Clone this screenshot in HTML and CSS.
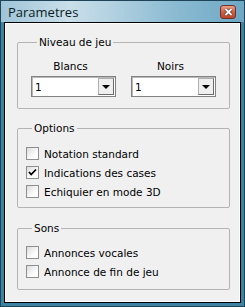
FILE: index.html
```html
<!DOCTYPE html>
<html lang="fr">
<head>
<meta charset="UTF-8" />
<meta name="viewport" content="width=device-width, initial-scale=1" />
<title>Parametres</title>
<link rel="stylesheet" href="styles.css">
</head>
<body>
<div class="window" role="dialog" aria-label="Parametres">
  <div class="titlebar">
    <span class="title">Parametres</span>
    <button class="close-btn" aria-label="Fermer">
      <svg width="9" height="8" viewBox="0 0 9 8"><path d="M1.5 1 L7.5 7 M7.5 1 L1.5 7" stroke="#6a2c20" stroke-width="3.2" fill="none"/><path d="M1.5 1 L7.5 7 M7.5 1 L1.5 7" stroke="#fff" stroke-width="1.8" fill="none"/></svg>
    </button>
  </div>
  <div class="client">
    <fieldset class="group group-level">
      <legend>Niveau de jeu</legend>
      <div class="level-row">
        <div class="level-col">
          <label class="level-label">Blancs</label>
          <div class="combo">
            <span class="combo-value">1</span>
            <span class="combo-btn"><span class="arrow"></span></span>
          </div>
        </div>
        <div class="level-col">
          <label class="level-label">Noirs</label>
          <div class="combo">
            <span class="combo-value">1</span>
            <span class="combo-btn"><span class="arrow"></span></span>
          </div>
        </div>
      </div>
    </fieldset>

    <fieldset class="group group-options">
      <legend>Options</legend>
      <label class="check-row"><span class="checkbox"></span>Notation standard</label>
      <label class="check-row"><span class="checkbox checked"><svg width="9" height="9" viewBox="0 0 9 9"><path d="M1 4 L3.2 6.5 L8 1.5" stroke="#000" stroke-width="1.8" fill="none"/></svg></span>Indications des cases</label>
      <label class="check-row"><span class="checkbox"></span>Echiquier en mode 3D</label>
    </fieldset>

    <fieldset class="group group-sounds">
      <legend>Sons</legend>
      <label class="check-row"><span class="checkbox"></span>Annonces vocales</label>
      <label class="check-row"><span class="checkbox"></span>Annonce de fin de jeu</label>
    </fieldset>
  </div>
</div>
</body>
</html>
```

FILE: styles.css
```css
body {
  margin: 0;
  font-family: "DejaVu Sans", sans-serif;
  font-size: 10.5px;
  color: #000;
  background: #fff;
}
.window {
  width: 245px;
  height: 307px;
  box-sizing: border-box;
  border: 1px solid #1f4457;
  padding: 0 3px 3px;
  display: flex;
  flex-direction: column;
  background: #3d81a3;
}
.titlebar {
  height: 21px;
  margin: 0 -3px;
  padding: 0 3px;
  display: flex;
  align-items: center;
  justify-content: space-between;
  background: linear-gradient(to right, #9fc4d7 0%, #c9dfea 28%, #b3d2e1 45%, #8dbcd3 70%, #6ea8c5 100%);
}
.title {
  font-family: "Open Sans", "DejaVu Sans", sans-serif;
  font-size: 13px;
  padding-left: 4px;
  padding-top: 1px;
  color: #0b1b24;
}
.close-btn {
  width: 16px;
  height: 14px;
  margin-right: 5px;
  margin-top: 1px;
  padding: 0;
  border: 1px solid #6e3326;
  border-radius: 3px;
  background: linear-gradient(#e9a08c, #cf6047 50%, #b9442d);
  display: flex;
  align-items: center;
  justify-content: center;
}
.client {
  flex: 1;
  border: 1px solid #000;
  box-shadow: inset 0 0 0 1px #fff;
  background: #f0f0f0;
  padding: 13px 10px 0 12px;
  display: flex;
  flex-direction: column;
}
.group {
  margin: 0;
  border: 1px solid #b4b4b4;
  border-radius: 2px;
  min-inline-size: 0;
}
.group legend {
  margin-left: 6px;
  padding: 0 2px;
  line-height: 13px;
}
.group-level {
  padding: 11px 0 11px 13px;
}
.group-options {
  margin-top: 13px;
  padding: 9px 0 6px 8px;
}
.group-sounds {
  margin-top: 14px;
  padding: 8px 0 8px 8px;
}
.level-row {
  display: flex;
  gap: 15px;
}
.level-col {
  width: 85px;
  display: flex;
  flex-direction: column;
  gap: 3px;
}
.level-label {
  text-align: center;
  padding-right: 6px;
  line-height: 13px;
}
.combo {
  height: 21px;
  box-sizing: border-box;
  border: 1px solid #828282;
  box-shadow: inset 1px 1px 0 #b8b8b8;
  background: #fff;
  display: flex;
  align-items: center;
}
.combo-value {
  flex: 1;
  padding-left: 3px;
}
.combo-btn {
  width: 16px;
  height: 17px;
  margin-right: 1px;
  box-sizing: border-box;
  border: 1px solid;
  border-color: #b0b0b0 #6b6b6b #6b6b6b #b0b0b0;
  background: #efefef;
  display: flex;
  align-items: center;
  justify-content: center;
}
.arrow {
  width: 0;
  height: 0;
  border-left: 4px solid transparent;
  border-right: 4px solid transparent;
  border-top: 4px solid #000;
}
.check-row {
  height: 19px;
  display: flex;
  align-items: center;
  gap: 5px;
}
.checkbox {
  width: 13px;
  height: 13px;
  box-sizing: border-box;
  border: 1px solid #8e8f8f;
  background: linear-gradient(135deg, #dcdcdc, #ffffff 70%);
  display: flex;
  align-items: center;
  justify-content: center;
}
```
